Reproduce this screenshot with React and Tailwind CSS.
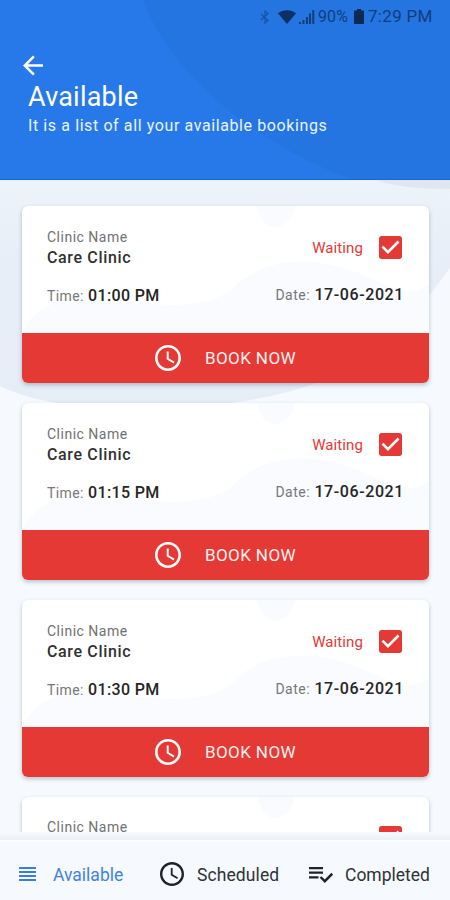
import React from "react";

const TIMES = ["01:00 PM", "01:15 PM", "01:30 PM"];

function Clock({ className }) {
  return (
    <svg viewBox="2 2 20 20" className={className} fill="currentColor">
      <path d="M11.99 2C6.47 2 2 6.48 2 12s4.47 10 9.99 10C17.52 22 22 17.52 22 12S17.52 2 11.99 2zM12 20c-4.42 0-8-3.58-8-8s3.58-8 8-8 8 3.58 8 8-3.58 8-8 8zm.5-13H11v6l5.25 3.15.75-1.23-4.5-2.67z" />
    </svg>
  );
}

function StatusBar() {
  return (
    <div className="flex h-[33px] items-center pl-[260px] text-[#113d7b]">
      <svg viewBox="0 0 10 14" className="h-[14px] w-[10px] opacity-60" fill="none" stroke="currentColor" strokeWidth="1.200">
        <path d="M1 4l7 6.5L5 13V1l3 2.5L1 10" />
      </svg>
      <svg viewBox="0 0 18 14" className="ml-[8px] h-[14px] w-[18px]" fill="#0c3061">
        <path d="M0 3.2C5-.7 13-.7 18 3.2L9 14z" />
      </svg>
      <svg viewBox="0 0 16 15" className="ml-[3px] h-[15px] w-[16px]" fill="currentColor">
        <path d="M0 13h2v2H0zM3.5 11h2v4h-2zM7 8h2v7H7zM10 4.500h2V15h-2zM13.300 1h2v14h-2z" />
      </svg>
      <span className="ml-[3px] w-[31px] whitespace-nowrap text-[16px] tracking-[0.1px]">90%</span>
      <svg viewBox="0 0 10 15" className="ml-[5px] h-[15px] w-[10px]" fill="#0c2a55">
        <path d="M3 0h4v1.500h3V15H0V1.500h3z" />
      </svg>
      <span className="ml-[4px] whitespace-nowrap text-[17px] tracking-[0.3px]">7:29 PM</span>
    </div>
  );
}

function Header() {
  return (
    <header className="relative h-[180px] shrink-0 border-b border-[#1767dc] bg-[#2779e9]">
      <svg viewBox="0 0 450 179" className="absolute inset-0 h-[179px] w-[450px]">
        <path d="M143 0C165 60 235 135 350 179H450V0z" fill="#2475e2" />
      </svg>
      <div className="relative">
        <StatusBar />
        <svg viewBox="4 4 16 16" className="ml-[23px] mt-[22px] h-[21px] w-[20px]" fill="#fff">
          <path d="M20 11H7.830l5.590-5.590L12 4l-8 8 8 8 1.410-1.410L7.830 13H20v-2z" />
        </svg>
        <h1 className="ml-[28px] mt-[5px] text-[27px] leading-[32px] tracking-[0.2px] text-white">Available</h1>
        <p className="ml-[28px] mt-[3px] text-[16px] leading-[20px] tracking-[0.6px] text-[#e9f3ff]">
          It is a list of all your available bookings
        </p>
      </div>
    </header>
  );
}

function Checkbox() {
  return (
    <svg viewBox="3 3 18 18" className="h-[23px] w-[23px] text-[#e53935]" fill="currentColor">
      <path d="M19 3H5c-1.110 0-2 .9-2 2v14c0 1.100.89 2 2 2h14c1.110 0 2-.9 2-2V5c0-1.100-.89-2-2-2zm-9 14l-5-5 1.410-1.410L10 14.170l7.590-7.590L19 8l-9 9z" />
    </svg>
  );
}

function BookingCard({ time }) {
  return (
    <article className="h-[177px] shrink-0 overflow-hidden rounded-[6px] bg-white shadow-[0_2px_4px_rgba(40,60,90,0.3)]">
      <div className="relative h-[127px]">
        <svg viewBox="0 0 407 127" className="absolute inset-0 h-[127px] w-[407px]">
          <path d="M0 127C12 103 38 88 75 91C125 98 180 108 211 82C240 52 286 49 331 65C365 77 382 95 407 78V127z" fill="#f9fbfe" />
          <path d="M235 0C237 10 242 21 254 21C264 20 271 12 273 0z" fill="#fafbfe" />
        </svg>
        <div className="relative flex justify-between pl-[25px] pr-[27px] pt-[21px]">
          <div>
            <p className="text-[14px] leading-[21px] tracking-[0.5px] text-[#717171]">Clinic Name</p>
            <p className="text-[16px] font-medium leading-[20px] tracking-[0.65px] text-[#303030]">Care Clinic</p>
          </div>
          <div className="flex h-[40px] items-center text-[#e53935]">
            <span className="mr-[16px] pt-[2px] text-[15px] tracking-[0.1px]">Waiting</span>
            <Checkbox />
          </div>
        </div>
        <div className="relative mt-[17px] flex items-baseline justify-between px-[25px] leading-[22px]">
          <p className="flex items-baseline whitespace-nowrap">
            <span className="w-[41px] text-[14px] tracking-[0.4px] text-[#777]">Time:</span>
            <span className="text-[16px] font-medium tracking-[0.35px] text-[#252525]">{time}</span>
          </p>
          <p className="relative -top-px flex items-baseline whitespace-nowrap">
            <span className="w-[39px] text-[14px] tracking-[0.5px] text-[#777]">Date:</span>
            <span className="text-[16px] font-medium tracking-[0.6px] text-[#252525]">17-06-2021</span>
          </p>
        </div>
      </div>
      <button className="flex h-[50px] w-full items-center bg-[#e53935] pl-[133px] text-white">
        <Clock className="h-[26px] w-[26px]" />
        <span className="ml-[24px] pt-[2px] text-[17px] tracking-[0.4px] text-[#fff0ee]">BOOK NOW</span>
      </button>
    </article>
  );
}

function PeekCard() {
  return (
    <article className="relative h-[60px] shrink-0 rounded-t-[6px] bg-white shadow-[0_2px_4px_rgba(40,60,90,0.3)]">
      <svg viewBox="0 0 407 60" className="absolute inset-0 h-[60px] w-[407px]">
        <path d="M235 0C237 10 242 21 254 21C264 20 271 12 273 0z" fill="#fafbfe" />
      </svg>
      <div className="relative flex justify-between pl-[25px] pr-[27px] pt-[20px]">
        <p className="text-[14px] leading-[21px] tracking-[0.5px] text-[#717171]">Clinic Name</p>
        <div className="pt-[9px]">
          <Checkbox />
        </div>
      </div>
    </article>
  );
}

function BottomNav() {
  return (
    <nav className="flex h-[60px] shrink-0 items-center border-t-2 border-white bg-[#f6fafe] pt-[7px] text-[17.5px] leading-[24px] text-[#303236]">
      <svg viewBox="0 0 17 14" className="ml-[19px] mt-[-2px] h-[14px] w-[17px]" fill="#3b7dde">
        <path d="M0 0h17v2H0zM0 4h17v2H0zM0 8h17v2H0zM0 12h17v2H0z" />
      </svg>
      <span className="ml-[17px] w-[71px] whitespace-nowrap text-[#3e82e5]">Available</span>
      <Clock className="ml-[36px] mt-[-2px] h-[24px] w-[24px] text-[#202226]" />
      <span className="ml-[13px] w-[82px] whitespace-nowrap tracking-[0.1px]">Scheduled</span>
      <svg viewBox="0 0 24 16" className="ml-[30px] h-[16px] w-[24px]" fill="#202226">
        <path d="M0 0h14v2.200H0zM0 4.600h14v2.200H0zM0 9.200h9.500v2.200H0z" />
        <path d="M11.500 10l4.300 4.200 7.500-7.500" fill="none" stroke="#202226" strokeWidth="2.400" />
      </svg>
      <span className="ml-[12px] whitespace-nowrap">Completed</span>
    </nav>
  );
}

export default function App() {
  return (
    <div className="relative flex h-[900px] w-[450px] flex-col overflow-hidden bg-[#f6fafe] font-[Roboto,sans-serif]">
      <Header />
      <div className="relative h-[652px] shrink-0 overflow-hidden">
        <svg viewBox="0 0 450 652" className="absolute inset-0 h-[652px] w-[450px]">
          <defs>
            <linearGradient id="wash" x1="0" y1="0" x2="0" y2="1">
              <stop offset="0" stopColor="#edf3fa" />
              <stop offset="0.4" stopColor="#e8eef8" />
              <stop offset="1" stopColor="#e5edf7" />
            </linearGradient>
          </defs>
          <path d="M0 0H450V88C420 130 380 175 318 202C250 230 80 245 0 206z" fill="url(#wash)" />
          <path d="M376 0C395 7 424 9 450 9V0z" fill="#e0e7f0" />
        </svg>
        <main className="relative flex flex-col gap-[20px] pl-[22px] pr-[21px] pt-[26px]">
          {TIMES.map((time) => (
            <BookingCard key={time} time={time} />
          ))}
          <PeekCard />
        </main>
      </div>
      <div className="h-[8px] shrink-0 bg-linear-to-b from-[#f7fafd] to-[#eceff3]" />
      <BottomNav />
    </div>
  );
}
